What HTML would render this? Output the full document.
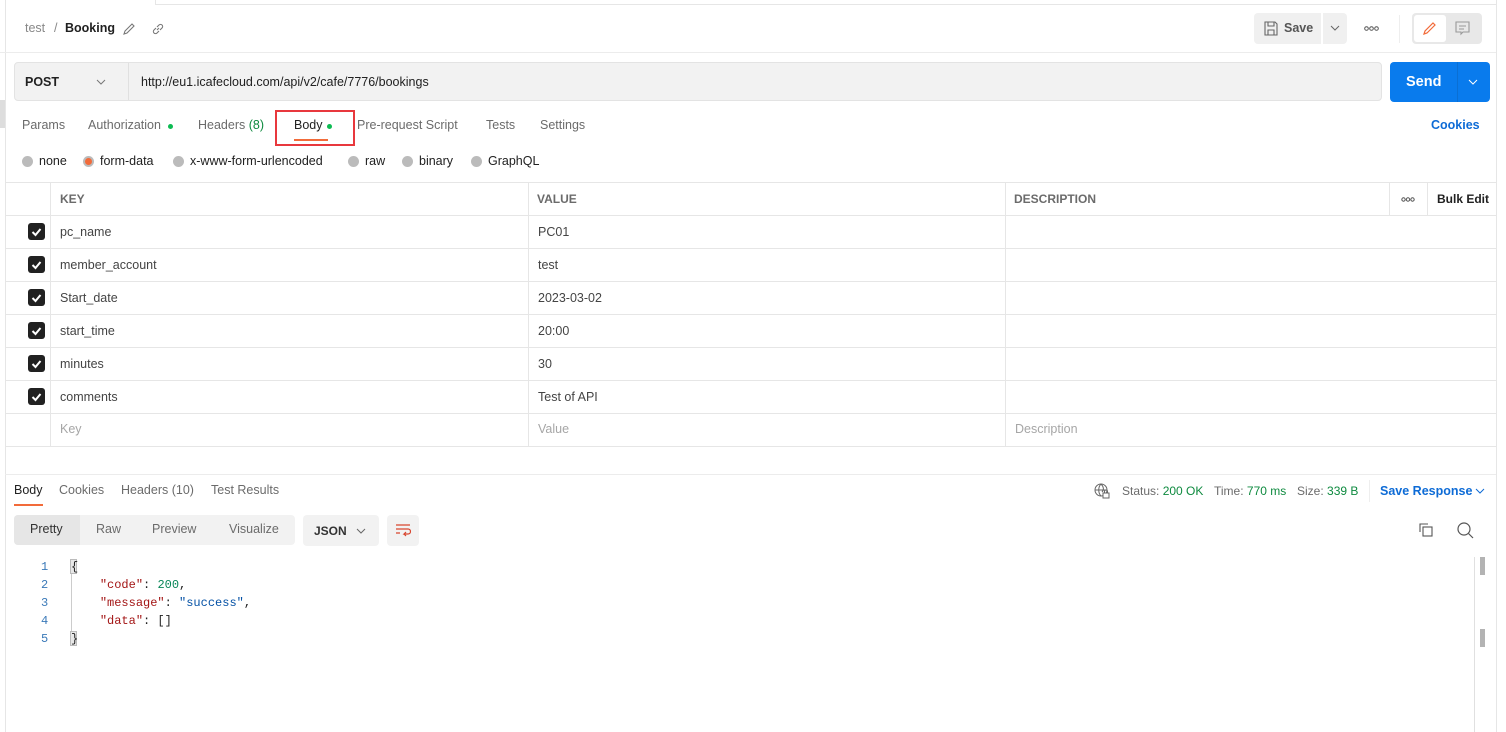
<!DOCTYPE html>
<html><head><style>
*{box-sizing:border-box;margin:0;padding:0}
body{width:1506px;height:732px;overflow:hidden;background:#fff;font-family:"Liberation Sans",sans-serif;font-size:12.5px;color:#212121;position:relative}
.a{position:absolute;white-space:nowrap}
.g{color:#6b6b6b}
.ln{position:absolute;background:#e6e6e6}
.cb{position:absolute;left:28px;width:17px;height:17px;background:#212121;border-radius:3px}
.cb svg{position:absolute;left:2px;top:2px}
.mono{font-family:"Liberation Mono",monospace;font-size:12px}
</style></head><body>
<div class="ln" style="left:5px;top:0;width:1px;height:732px"></div>
<div class="ln" style="left:1496px;top:0;width:1px;height:732px"></div>
<div class="ln" style="left:155px;top:4px;width:1342px;height:1px"></div>
<div class="ln" style="left:155px;top:0;width:1px;height:5px"></div>
<div class="ln" style="left:0;top:52px;width:1496px;height:1px;background:#ececec"></div>
<div class="ln" style="left:0;top:100px;width:5px;height:28px;background:#ddd"></div>

<div class="a" style="left:25px;top:21px;color:#888">test</div>
<div class="a" style="left:54px;top:21px;color:#888">/</div>
<div class="a" style="left:65px;top:21px;font-weight:bold;color:#212121">Booking</div>
<svg class="a" style="left:122px;top:22px" width="14" height="14" viewBox="0 0 14 14" fill="none" stroke="#777" stroke-width="1.1"><path d="M2 12l1-3 7-7 2 2-7 7z"/></svg>
<svg class="a" style="left:151px;top:22px" width="14" height="14" viewBox="0 0 14 14" fill="none" stroke="#777" stroke-width="1.1"><path d="M6 8l2-2M5 6l-2 2a2 2 0 003 3l2-2M9 8l2-2a2 2 0 00-3-3L6 5"/></svg>

<div class="a" style="left:1254px;top:13px;width:67px;height:31px;background:#f0f0f0;border-radius:4px 0 0 4px"></div>
<svg class="a" style="left:1264px;top:21px" width="14" height="15" viewBox="0 0 14 15" fill="none" stroke="#666" stroke-width="1.1"><path d="M1 1h10l2 2v11H1z M4 1v4h6V1 M4 14V9h6v5"/></svg>
<div class="a" style="left:1284px;top:21px;color:#555;font-weight:bold">Save</div>
<div class="a" style="left:1323px;top:13px;width:24px;height:31px;background:#f0f0f0;border-radius:0 4px 4px 0"></div>
<svg class="a" style="left:1330px;top:25px" width="10" height="6"><path d="M1 1l4 4 4-4" stroke="#666" fill="none"/></svg>
<svg class="a" style="left:1364px;top:26px" width="15" height="5" fill="none" stroke="#555"><circle cx="2.5" cy="2.5" r="1.8"/><circle cx="7.5" cy="2.5" r="1.8"/><circle cx="12.5" cy="2.5" r="1.8"/></svg>
<div class="ln" style="left:1399px;top:15px;width:1px;height:28px;background:#eee"></div>
<div class="a" style="left:1412px;top:13px;width:70px;height:31px;background:#e8e8e8;border-radius:4px"></div>
<div class="a" style="left:1414px;top:15px;width:32px;height:27px;background:#fff;border-radius:3px"></div>
<svg class="a" style="left:1422px;top:21px" width="15" height="15" viewBox="0 0 15 15" fill="none" stroke="#f26b3a" stroke-width="1.2"><path d="M2 13l1-3 8-8 2 2-8 8z"/></svg>
<svg class="a" style="left:1455px;top:21px" width="15" height="15" viewBox="0 0 15 15" fill="none" stroke="#999" stroke-width="1.1"><path d="M1 1h13v10H8l-2 2v-2H1z M4 5h7M4 8h5"/></svg>

<div class="a" style="left:14px;top:62px;width:1368px;height:39px;background:#f2f2f2;border:1px solid #e3e3e3;border-radius:4px"></div>
<div class="ln" style="left:128px;top:63px;width:1px;height:37px;background:#e0e0e0"></div>
<div class="a" style="left:25px;top:75px;font-weight:bold">POST</div>
<svg class="a" style="left:96px;top:79px" width="10" height="6"><path d="M1 1l4 4 4-4" stroke="#777" fill="none"/></svg>
<div class="a" style="left:141px;top:75px">http://eu1.icafecloud.com/api/v2/cafe/7776/bookings</div>
<div class="a" style="left:1390px;top:62px;width:100px;height:40px;background:#097bed;border-radius:4px"></div>
<div class="ln" style="left:1457px;top:62px;width:1px;height:40px;background:#0a6fd4"></div>
<div class="a" style="left:1406px;top:74px;color:#fff;font-weight:bold;font-size:14.5px">Send</div>
<svg class="a" style="left:1468px;top:79px" width="10" height="6"><path d="M1 1l4 4 4-4" stroke="#fff" fill="none"/></svg>

<div class="a g" style="left:22px;top:118px">Params</div>
<div class="a g" style="left:88px;top:118px">Authorization</div>
<div class="a" style="left:168px;top:124px;width:5px;height:5px;border-radius:50%;background:#0cbb52"></div>
<div class="a g" style="left:198px;top:118px">Headers <span style="color:#0e8a3f">(8)</span></div>
<div class="a" style="left:294px;top:118px">Body</div>
<div class="a" style="left:327px;top:124px;width:5px;height:5px;border-radius:50%;background:#0cbb52"></div>
<div class="a" style="left:294px;top:139px;width:34px;height:2px;background:#f26b3a"></div>
<div class="a" style="left:275px;top:110px;width:80px;height:36px;border:2px solid #e8383d"></div>
<div class="a g" style="left:357px;top:118px">Pre-request Script</div>
<div class="a g" style="left:486px;top:118px">Tests</div>
<div class="a g" style="left:540px;top:118px">Settings</div>
<div class="a" style="left:1431px;top:118px;color:#0d6bd6;font-weight:bold">Cookies</div>

<div class="a" style="left:22px;top:156px;width:11px;height:11px;border-radius:50%;background:#bbb"></div>
<div class="a" style="left:39px;top:154px">none</div>
<div class="a" style="left:83px;top:156px;width:11px;height:11px;border-radius:50%;background:#bbb"></div>
<div class="a" style="left:85px;top:158px;width:7px;height:7px;border-radius:50%;background:#f26b3a"></div>
<div class="a" style="left:100px;top:154px">form-data</div>
<div class="a" style="left:173px;top:156px;width:11px;height:11px;border-radius:50%;background:#bbb"></div>
<div class="a" style="left:190px;top:154px">x-www-form-urlencoded</div>
<div class="a" style="left:348px;top:156px;width:11px;height:11px;border-radius:50%;background:#bbb"></div>
<div class="a" style="left:365px;top:154px">raw</div>
<div class="a" style="left:402px;top:156px;width:11px;height:11px;border-radius:50%;background:#bbb"></div>
<div class="a" style="left:419px;top:154px">binary</div>
<div class="a" style="left:471px;top:156px;width:11px;height:11px;border-radius:50%;background:#bbb"></div>
<div class="a" style="left:488px;top:154px">GraphQL</div>

<div class="ln" style="left:5px;top:182px;width:1491px;height:1px"></div>
<div class="ln" style="left:5px;top:215px;width:1491px;height:1px"></div>
<div class="ln" style="left:5px;top:248px;width:1491px;height:1px"></div>
<div class="ln" style="left:5px;top:281px;width:1491px;height:1px"></div>
<div class="ln" style="left:5px;top:314px;width:1491px;height:1px"></div>
<div class="ln" style="left:5px;top:347px;width:1491px;height:1px"></div>
<div class="ln" style="left:5px;top:380px;width:1491px;height:1px"></div>
<div class="ln" style="left:5px;top:413px;width:1491px;height:1px"></div>
<div class="ln" style="left:5px;top:446px;width:1491px;height:1px"></div>
<div class="ln" style="left:50px;top:182px;width:1px;height:264px"></div>
<div class="ln" style="left:528px;top:182px;width:1px;height:264px"></div>
<div class="ln" style="left:1005px;top:182px;width:1px;height:264px"></div>
<div class="ln" style="left:1389px;top:182px;width:1px;height:33px"></div>
<div class="ln" style="left:1427px;top:182px;width:1px;height:33px"></div>
<div class="a g" style="left:60px;top:192px;font-weight:bold;font-size:12px">KEY</div>
<div class="a g" style="left:537px;top:192px;font-weight:bold;font-size:12px">VALUE</div>
<div class="a g" style="left:1014px;top:192px;font-weight:bold;font-size:12px">DESCRIPTION</div>
<svg class="a" style="left:1401px;top:197px" width="14" height="5" fill="none" stroke="#555"><circle cx="2.5" cy="2.5" r="1.7"/><circle cx="7" cy="2.5" r="1.7"/><circle cx="11.5" cy="2.5" r="1.7"/></svg>
<div class="a" style="left:1437px;top:192px;font-weight:bold;font-size:12px">Bulk Edit</div>

<div class="cb" style="top:223px"><svg width="13" height="13"><path d="M2.5 7l3 3 5-6" stroke="#fff" stroke-width="2" fill="none"/></svg></div>
<div class="a" style="left:60px;top:225px;color:#444">pc_name</div><div class="a" style="left:538px;top:225px;color:#444">PC01</div>
<div class="cb" style="top:256px"><svg width="13" height="13"><path d="M2.5 7l3 3 5-6" stroke="#fff" stroke-width="2" fill="none"/></svg></div>
<div class="a" style="left:60px;top:258px;color:#444">member_account</div><div class="a" style="left:538px;top:258px;color:#444">test</div>
<div class="cb" style="top:289px"><svg width="13" height="13"><path d="M2.5 7l3 3 5-6" stroke="#fff" stroke-width="2" fill="none"/></svg></div>
<div class="a" style="left:60px;top:291px;color:#444">Start_date</div><div class="a" style="left:538px;top:291px;color:#444">2023-03-02</div>
<div class="cb" style="top:322px"><svg width="13" height="13"><path d="M2.5 7l3 3 5-6" stroke="#fff" stroke-width="2" fill="none"/></svg></div>
<div class="a" style="left:60px;top:324px;color:#444">start_time</div><div class="a" style="left:538px;top:324px;color:#444">20:00</div>
<div class="cb" style="top:355px"><svg width="13" height="13"><path d="M2.5 7l3 3 5-6" stroke="#fff" stroke-width="2" fill="none"/></svg></div>
<div class="a" style="left:60px;top:357px;color:#444">minutes</div><div class="a" style="left:538px;top:357px;color:#444">30</div>
<div class="cb" style="top:388px"><svg width="13" height="13"><path d="M2.5 7l3 3 5-6" stroke="#fff" stroke-width="2" fill="none"/></svg></div>
<div class="a" style="left:60px;top:390px;color:#444">comments</div><div class="a" style="left:538px;top:390px;color:#444">Test of API</div>
<div class="a" style="left:60px;top:422px;color:#a6a6a6">Key</div>
<div class="a" style="left:538px;top:422px;color:#a6a6a6">Value</div>
<div class="a" style="left:1015px;top:422px;color:#a6a6a6">Description</div>

<div class="ln" style="left:5px;top:474px;width:1491px;height:1px;background:#ececec"></div>
<div class="a" style="left:14px;top:483px">Body</div>
<div class="a" style="left:14px;top:504px;width:29px;height:2px;background:#f26b3a"></div>
<div class="a g" style="left:59px;top:483px">Cookies</div>
<div class="a g" style="left:121px;top:483px">Headers (10)</div>
<div class="a g" style="left:211px;top:483px">Test Results</div>

<svg class="a" style="left:1094px;top:483px" width="17" height="16" viewBox="0 0 17 16" fill="none" stroke="#666" stroke-width="1"><circle cx="7" cy="7" r="6"/><path d="M1 7h12M7 1c-3 3-3 9 0 12M7 1c3 3 3 6 1 8"/><rect x="9" y="10" width="6" height="5" fill="#fff"/><path d="M10.5 10V8.5a1.5 1.5 0 013 0V10"/></svg>
<div class="a g" style="left:1122px;top:484px;font-size:12px">Status: <span style="color:#0e8a3f">200 OK</span></div>
<div class="a g" style="left:1214px;top:484px;font-size:12px">Time: <span style="color:#0e8a3f">770 ms</span></div>
<div class="a g" style="left:1297px;top:484px;font-size:12px">Size: <span style="color:#0e8a3f">339 B</span></div>
<div class="ln" style="left:1369px;top:480px;width:1px;height:22px;background:#eee"></div>
<div class="a" style="left:1380px;top:484px;color:#0d6bd6;font-weight:bold;font-size:12.5px">Save Response</div>
<svg class="a" style="left:1475px;top:488px" width="10" height="6"><path d="M1 1l4 4 4-4" stroke="#0d6bd6" fill="none"/></svg>

<div class="a" style="left:14px;top:515px;width:281px;height:30px;background:#f2f2f2;border-radius:4px"></div>
<div class="a" style="left:14px;top:515px;width:66px;height:30px;background:#e6e6e6;border-radius:4px 0 0 4px"></div>
<div class="a" style="left:30px;top:522px;color:#333">Pretty</div>
<div class="a g" style="left:96px;top:522px">Raw</div>
<div class="a g" style="left:152px;top:522px">Preview</div>
<div class="a g" style="left:229px;top:522px">Visualize</div>
<div class="a" style="left:303px;top:515px;width:76px;height:31px;background:#f2f2f2;border-radius:4px"></div>
<div class="a" style="left:314px;top:524px;font-weight:bold;font-size:12px;color:#333">JSON</div>
<svg class="a" style="left:356px;top:528px" width="10" height="6"><path d="M1 1l4 4 4-4" stroke="#666" fill="none"/></svg>
<div class="a" style="left:387px;top:515px;width:32px;height:31px;background:#f2f2f2;border-radius:4px"></div>
<svg class="a" style="left:395px;top:523px" width="16" height="14" viewBox="0 0 16 14" fill="none" stroke="#d8452e" stroke-width="1.2"><path d="M1 2h14M1 6h12a2.5 2.5 0 010 5H9l2-2M9 11l2 2M1 10h4"/></svg>
<svg class="a" style="left:1418px;top:522px" width="16" height="16" viewBox="0 0 16 16" fill="none" stroke="#555" stroke-width="1.1"><path d="M2 10V2h8"/><rect x="5" y="5" width="9" height="9"/></svg>
<svg class="a" style="left:1457px;top:522px" width="17" height="17" viewBox="0 0 17 17" fill="none" stroke="#555" stroke-width="1.2"><circle cx="7" cy="7" r="6"/><path d="M11.5 11.5L16 16"/></svg>

<div class="ln" style="left:1474px;top:557px;width:1px;height:175px;background:#e0e0e0"></div>
<div class="a" style="left:1480px;top:557px;width:5px;height:18px;background:#b3b3b3"></div>
<div class="a" style="left:1480px;top:629px;width:5px;height:18px;background:#b3b3b3"></div>

<div class="mono a" style="left:41px;top:558px;color:#3a79b8;line-height:18px;text-align:right">1<br>2<br>3<br>4<br>5</div>
<div class="ln" style="left:71px;top:573px;width:1px;height:60px;background:#ccc"></div>
<div class="a" style="left:70px;top:559px;width:7px;height:15px;background:#e8e8e8;border:1px solid #bbb"></div>
<div class="a" style="left:70px;top:631px;width:7px;height:15px;background:#e8e8e8;border:1px solid #bbb"></div>
<div class="mono a" style="left:71px;top:558px;line-height:18px;color:#212121;white-space:pre">{
    <span style="color:#a31515">"code"</span>: <span style="color:#098658">200</span>,
    <span style="color:#a31515">"message"</span>: <span style="color:#0451a5">"success"</span>,
    <span style="color:#a31515">"data"</span>: []
}</div>
</body></html>
